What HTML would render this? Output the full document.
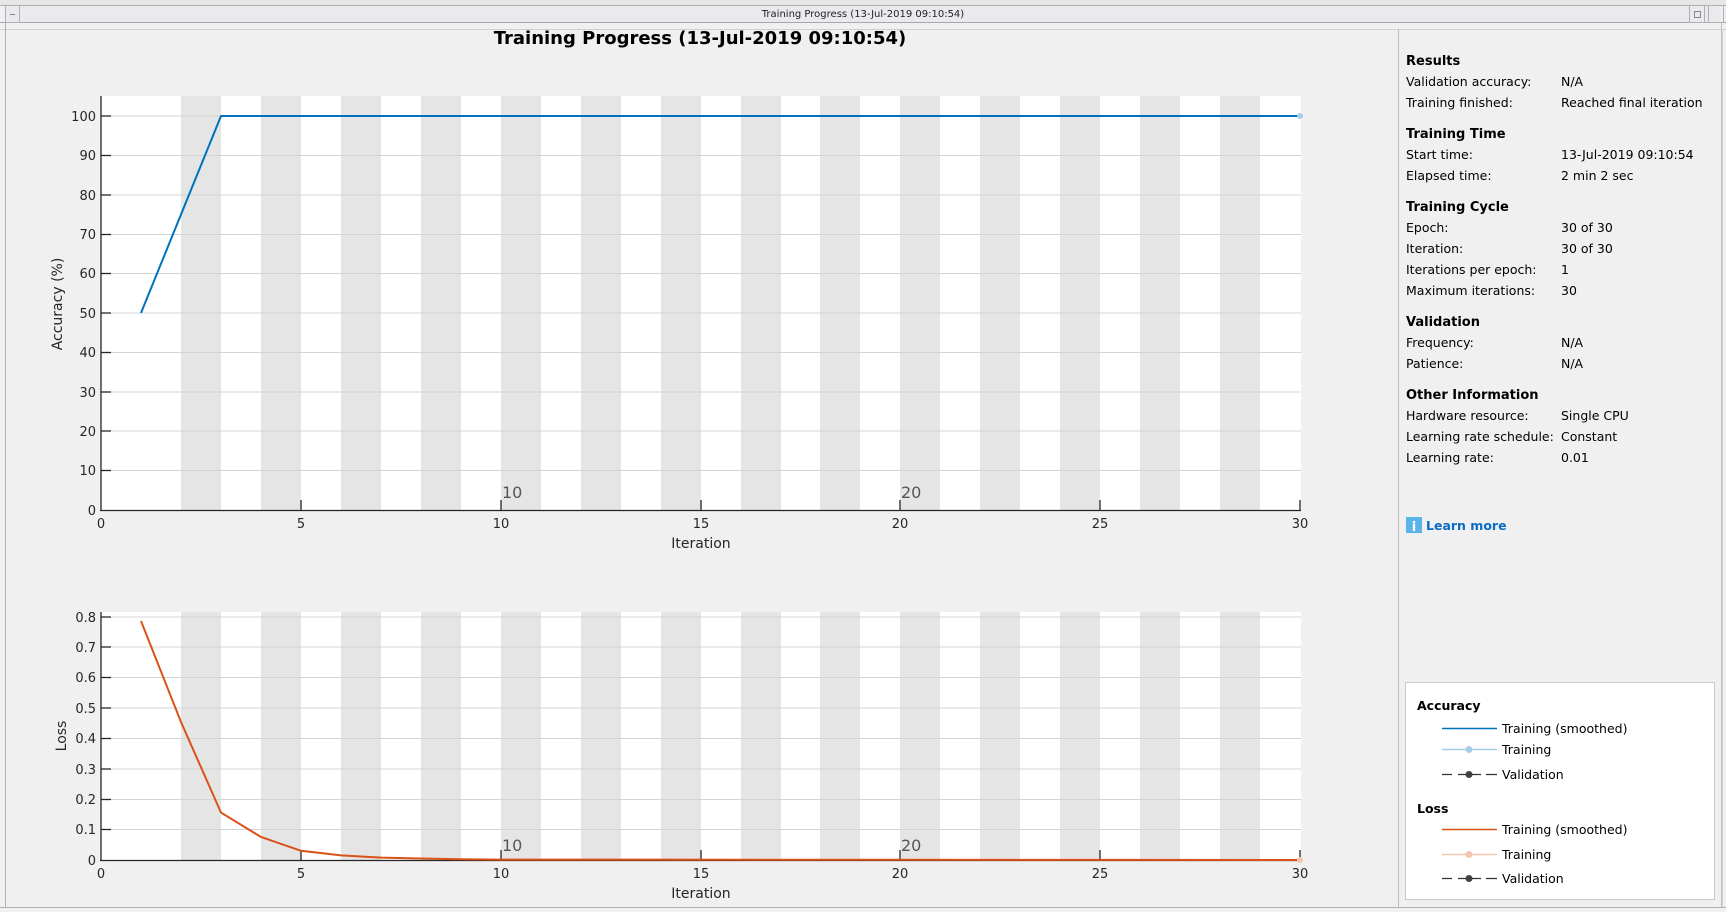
<!DOCTYPE html>
<html><head><meta charset="utf-8"><style>
html,body{margin:0;padding:0;background:#f0f0f0;}
svg{display:block;font-family:"DejaVu Sans","Liberation Sans",sans-serif;}
</style></head><body>
<svg width="1726" height="912" viewBox="0 0 1726 912" xmlns="http://www.w3.org/2000/svg">
<rect width="1726" height="912" fill="#f0f0f0"/>
<rect x="0" y="0" width="1726" height="5" fill="#e6e6e6"/>
<rect x="5" y="5" width="1716" height="18" fill="#eae9ed"/>
<line x1="0" y1="5.5" x2="1726" y2="5.5" stroke="#b0b0b0"/>
<line x1="0" y1="22.5" x2="1726" y2="22.5" stroke="#a8a8a8"/>
<line x1="0" y1="29.5" x2="1726" y2="29.5" stroke="#d0d0d0"/>
<rect x="5.5" y="5.5" width="14" height="17" fill="none" stroke="#b0b0b0"/>
<line x1="10" y1="14.5" x2="15" y2="14.5" stroke="#888"/>
<rect x="1689.5" y="5.5" width="15" height="17" fill="none" stroke="#b0b0b0"/>
<rect x="1694.5" y="11.5" width="6" height="6" fill="none" stroke="#888"/>
<rect x="1708.5" y="5.5" width="15" height="17" fill="none" stroke="#b0b0b0"/>
<text x="863" y="17" font-size="10" text-anchor="middle" fill="#222">Training Progress (13-Jul-2019 09:10:54)</text>
<line x1="5.5" y1="23" x2="5.5" y2="907" stroke="#b0b0b0"/>
<line x1="0" y1="907.5" x2="1726" y2="907.5" stroke="#b0b0b0"/>
<line x1="1721.5" y1="23" x2="1721.5" y2="907" stroke="#c0c0c0"/>

<text x="700" y="44" font-size="18" font-weight="bold" text-anchor="middle" fill="#000">Training Progress (13-Jul-2019 09:10:54)</text>

<rect x="101" y="96" width="1200" height="414" fill="#fff"/>
<g fill="#e5e5e5">
<rect x="181" y="96" width="40" height="414"/><rect x="261" y="96" width="40" height="414"/><rect x="341" y="96" width="40" height="414"/><rect x="421" y="96" width="40" height="414"/><rect x="501" y="96" width="40" height="414"/><rect x="581" y="96" width="40" height="414"/><rect x="661" y="96" width="40" height="414"/><rect x="741" y="96" width="40" height="414"/><rect x="820" y="96" width="40" height="414"/><rect x="900" y="96" width="40" height="414"/><rect x="980" y="96" width="40" height="414"/><rect x="1060" y="96" width="40" height="414"/><rect x="1140" y="96" width="40" height="414"/><rect x="1220" y="96" width="40" height="414"/>
</g>
<g stroke="#d4d4d4" stroke-width="1">
<line x1="101" x2="1301" y1="116" y2="116"/><line x1="101" x2="1301" y1="155.5" y2="155.5"/><line x1="101" x2="1301" y1="195" y2="195"/><line x1="101" x2="1301" y1="234.5" y2="234.5"/><line x1="101" x2="1301" y1="273.5" y2="273.5"/><line x1="101" x2="1301" y1="313" y2="313"/><line x1="101" x2="1301" y1="352.5" y2="352.5"/><line x1="101" x2="1301" y1="392" y2="392"/><line x1="101" x2="1301" y1="431" y2="431"/><line x1="101" x2="1301" y1="470.5" y2="470.5"/>
</g>
<g stroke="#262626" stroke-width="1.3">
<line x1="101" y1="96" x2="101" y2="510.5"/><line x1="100" y1="510.5" x2="1301" y2="510.5"/>
<line x1="101" x2="111" y1="116" y2="116"/><line x1="101" x2="111" y1="155.5" y2="155.5"/><line x1="101" x2="111" y1="195" y2="195"/><line x1="101" x2="111" y1="234.5" y2="234.5"/><line x1="101" x2="111" y1="273.5" y2="273.5"/><line x1="101" x2="111" y1="313" y2="313"/><line x1="101" x2="111" y1="352.5" y2="352.5"/><line x1="101" x2="111" y1="392" y2="392"/><line x1="101" x2="111" y1="431" y2="431"/><line x1="101" x2="111" y1="470.5" y2="470.5"/>
<line x1="301" x2="301" y1="500" y2="510"/><line x1="501" x2="501" y1="500" y2="510"/><line x1="701" x2="701" y1="500" y2="510"/><line x1="900" x2="900" y1="500" y2="510"/><line x1="1100" x2="1100" y1="500" y2="510"/><line x1="1300" x2="1300" y1="500" y2="510"/>
</g>
<g font-size="13" fill="#262626" text-anchor="end">
<text x="96" y="121">100</text><text x="96" y="160">90</text><text x="96" y="200">80</text><text x="96" y="239">70</text><text x="96" y="278">60</text><text x="96" y="318">50</text><text x="96" y="357">40</text><text x="96" y="397">30</text><text x="96" y="436">20</text><text x="96" y="475">10</text><text x="96" y="515">0</text>
</g>
<g font-size="13" fill="#262626" text-anchor="middle">
<text x="101" y="528">0</text><text x="301" y="528">5</text><text x="501" y="528">10</text><text x="701" y="528">15</text><text x="900" y="528">20</text><text x="1100" y="528">25</text><text x="1300" y="528">30</text>
<text x="701" y="548" font-size="14">Iteration</text>
</g>
<text transform="translate(62,304) rotate(-90)" font-size="14" fill="#262626" text-anchor="middle">Accuracy (%)</text>
<text x="502" y="498" font-size="16" fill="#555">10</text>
<text x="901" y="498" font-size="16" fill="#555">20</text>
<polyline points="141,313 181,214.5 221,116 1300,116" fill="none" stroke="#0072bd" stroke-width="2"/>
<circle cx="1300" cy="116" r="3" fill="#a6cee8"/>

<rect x="101" y="612" width="1200" height="248" fill="#fff"/>
<g fill="#e5e5e5">
<rect x="181" y="612" width="40" height="248"/><rect x="261" y="612" width="40" height="248"/><rect x="341" y="612" width="40" height="248"/><rect x="421" y="612" width="40" height="248"/><rect x="501" y="612" width="40" height="248"/><rect x="581" y="612" width="40" height="248"/><rect x="661" y="612" width="40" height="248"/><rect x="741" y="612" width="40" height="248"/><rect x="820" y="612" width="40" height="248"/><rect x="900" y="612" width="40" height="248"/><rect x="980" y="612" width="40" height="248"/><rect x="1060" y="612" width="40" height="248"/><rect x="1140" y="612" width="40" height="248"/><rect x="1220" y="612" width="40" height="248"/>
</g>
<g stroke="#d4d4d4">
<line x1="101" x2="1301" y1="617" y2="617"/><line x1="101" x2="1301" y1="647" y2="647"/><line x1="101" x2="1301" y1="677.5" y2="677.5"/><line x1="101" x2="1301" y1="708" y2="708"/><line x1="101" x2="1301" y1="738.5" y2="738.5"/><line x1="101" x2="1301" y1="769" y2="769"/><line x1="101" x2="1301" y1="799.5" y2="799.5"/><line x1="101" x2="1301" y1="829.5" y2="829.5"/>
</g>
<g stroke="#262626" stroke-width="1.3">
<line x1="101" y1="612" x2="101" y2="860.5"/><line x1="100" y1="860.5" x2="1301" y2="860.5"/>
<line x1="101" x2="111" y1="617" y2="617"/><line x1="101" x2="111" y1="647" y2="647"/><line x1="101" x2="111" y1="677.5" y2="677.5"/><line x1="101" x2="111" y1="708" y2="708"/><line x1="101" x2="111" y1="738.5" y2="738.5"/><line x1="101" x2="111" y1="769" y2="769"/><line x1="101" x2="111" y1="799.5" y2="799.5"/><line x1="101" x2="111" y1="829.5" y2="829.5"/>
<line x1="301" x2="301" y1="850" y2="860"/><line x1="501" x2="501" y1="850" y2="860"/><line x1="701" x2="701" y1="850" y2="860"/><line x1="900" x2="900" y1="850" y2="860"/><line x1="1100" x2="1100" y1="850" y2="860"/><line x1="1300" x2="1300" y1="850" y2="860"/>
</g>
<g font-size="13" fill="#262626" text-anchor="end">
<text x="96" y="622">0.8</text><text x="96" y="652">0.7</text><text x="96" y="682">0.6</text><text x="96" y="713">0.5</text><text x="96" y="743">0.4</text><text x="96" y="774">0.3</text><text x="96" y="804">0.2</text><text x="96" y="834">0.1</text><text x="96" y="865">0</text>
</g>
<g font-size="13" fill="#262626" text-anchor="middle">
<text x="101" y="878">0</text><text x="301" y="878">5</text><text x="501" y="878">10</text><text x="701" y="878">15</text><text x="900" y="878">20</text><text x="1100" y="878">25</text><text x="1300" y="878">30</text>
<text x="701" y="898" font-size="14">Iteration</text>
</g>
<text transform="translate(66,736) rotate(-90)" font-size="14" fill="#262626" text-anchor="middle">Loss</text>
<text x="502" y="851" font-size="16" fill="#555">10</text>
<text x="901" y="851" font-size="16" fill="#555">20</text>
<polyline points="141,621 181,722 221,812.6 261,837 301,850.8 341,855.4 381,857.6 421,858.5 461,859.2 501,859.6 1300,860" fill="none" stroke="#d95319" stroke-width="2"/>
<circle cx="1300" cy="860" r="3" fill="#f4c6b0"/>

<line x1="1398.5" y1="30" x2="1398.5" y2="907" stroke="#bdbdbd"/>
<line x1="1722" y1="30" x2="1722" y2="907" stroke="#bdbdbd"/>
<g font-size="12.5" fill="#000">
<g font-weight="bold" font-size="13">
<text x="1406" y="65">Results</text><text x="1406" y="138">Training Time</text><text x="1406" y="211">Training Cycle</text><text x="1406" y="326">Validation</text><text x="1406" y="399">Other Information</text>
</g>
<text x="1406" y="86">Validation accuracy:</text><text x="1561" y="86">N/A</text>
<text x="1406" y="107">Training finished:</text><text x="1561" y="107">Reached final iteration</text>
<text x="1406" y="159">Start time:</text><text x="1561" y="159">13-Jul-2019 09:10:54</text>
<text x="1406" y="180">Elapsed time:</text><text x="1561" y="180">2 min 2 sec</text>
<text x="1406" y="232">Epoch:</text><text x="1561" y="232">30 of 30</text>
<text x="1406" y="253">Iteration:</text><text x="1561" y="253">30 of 30</text>
<text x="1406" y="274">Iterations per epoch:</text><text x="1561" y="274">1</text>
<text x="1406" y="295">Maximum iterations:</text><text x="1561" y="295">30</text>
<text x="1406" y="347">Frequency:</text><text x="1561" y="347">N/A</text>
<text x="1406" y="368">Patience:</text><text x="1561" y="368">N/A</text>
<text x="1406" y="420">Hardware resource:</text><text x="1561" y="420">Single CPU</text>
<text x="1406" y="441">Learning rate schedule:</text><text x="1561" y="441">Constant</text>
<text x="1406" y="462">Learning rate:</text><text x="1561" y="462">0.01</text>
</g>
<rect x="1406" y="517" width="16" height="16" fill="#5ab4e8"/>
<text x="1414" y="531" font-size="13" font-weight="bold" fill="#fff" text-anchor="middle">i</text>
<text x="1426" y="530" font-size="12.5" font-weight="bold" fill="#0a6cc4">Learn more</text>

<rect x="1405.5" y="682.5" width="309" height="217" fill="#fff" stroke="#c8c8c8"/>
<g font-size="12.5" fill="#000">
<text x="1417" y="710" font-weight="bold">Accuracy</text>
<text x="1417" y="813" font-weight="bold">Loss</text>
<text x="1502" y="733">Training (smoothed)</text>
<text x="1502" y="754">Training</text>
<text x="1502" y="779">Validation</text>
<text x="1502" y="834">Training (smoothed)</text>
<text x="1502" y="859">Training</text>
<text x="1502" y="883">Validation</text>
</g>
<line x1="1442" y1="728.5" x2="1497" y2="728.5" stroke="#0072bd" stroke-width="1.5"/>
<line x1="1442" y1="749.5" x2="1497" y2="749.5" stroke="#a6cee8" stroke-width="1.5"/>
<circle cx="1469" cy="749.5" r="3.5" fill="#a6cee8"/>
<path d="M1442 774.5h10M1486 774.5h11" stroke="#333" stroke-width="1.3"/>
<line x1="1458" y1="774.5" x2="1481" y2="774.5" stroke="#333" stroke-width="1.3"/>
<circle cx="1469" cy="774.5" r="3.5" fill="#404040"/>
<line x1="1442" y1="829.5" x2="1497" y2="829.5" stroke="#d95319" stroke-width="1.5"/>
<line x1="1442" y1="854.5" x2="1497" y2="854.5" stroke="#f4c6b0" stroke-width="1.5"/>
<circle cx="1469" cy="854.5" r="3.5" fill="#f4c6b0"/>
<path d="M1442 878.5h10M1486 878.5h11" stroke="#333" stroke-width="1.3"/>
<line x1="1458" y1="878.5" x2="1481" y2="878.5" stroke="#333" stroke-width="1.3"/>
<circle cx="1469" cy="878.5" r="3.5" fill="#404040"/>
</svg>
</body></html>
